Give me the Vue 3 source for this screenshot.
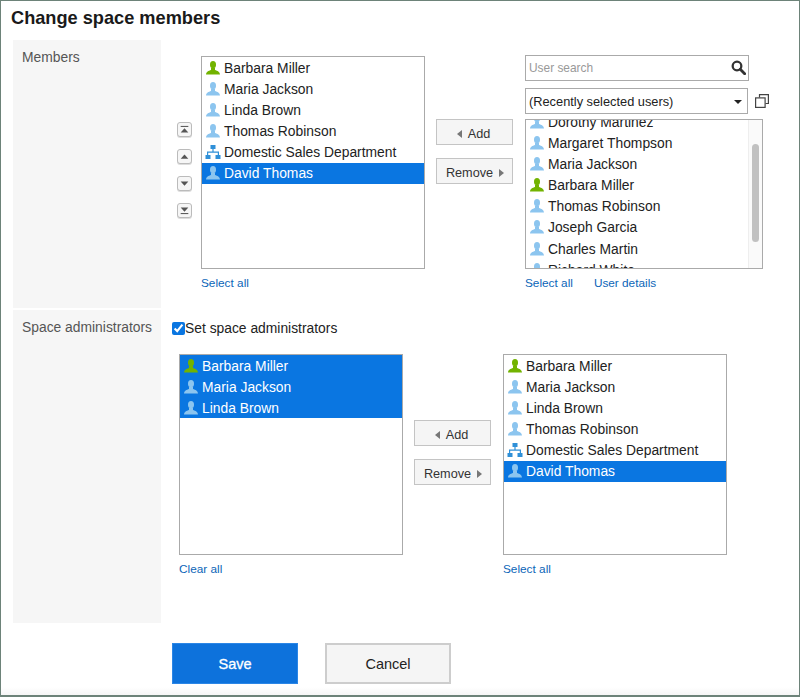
<template>
  <div class="page">
    <!-- shared icons -->
    <svg class="sprite" aria-hidden="true">
      <symbol id="person" viewBox="0 0 14 14">
        <ellipse cx="7" cy="3.7" rx="3" ry="3.6" />
        <path d="M0 13.6C0 10.8 2.6 9.9 5 9V7h4v2c2.4.9 5 1.8 5 4.6z" />
      </symbol>
      <symbol id="org" viewBox="0 0 16 14">
        <rect x="5.5" y="0" width="5" height="4" />
        <rect x="0.5" y="10" width="5" height="4" />
        <rect x="10.5" y="10" width="5" height="4" />
        <path d="M7.4 4h1.2v2.6H14V10h-1.2V7.8H3.2V10H2V6.6h5.4z" />
      </symbol>
    </svg>

    <h1 class="title">Change space members</h1>

    <section class="row row-members">
      <div class="label">Members</div>
      <div class="content picker">
        <div class="order">
          <button v-for="o in orderBtns" :key="o" class="order-btn" type="button">
            <svg width="11" height="9" viewBox="0 0 11 9">
              <rect v-if="o === 'top'" x="1" y="0" width="9" height="1.5" />
              <path v-if="o === 'top' || o === 'up'" :d="o === 'top' ? 'M5.5 3L10 8H1z' : 'M5.5 2L10 7H1z'" />
              <path v-if="o === 'down' || o === 'bottom'" :d="o === 'bottom' ? 'M1 1h9L5.5 6z' : 'M1 2h9L5.5 7z'" />
              <rect v-if="o === 'bottom'" x="1" y="7.5" width="9" height="1.5" />
            </svg>
          </button>
        </div>

        <div class="col-list">
          <ul class="listbox members-box">
            <li v-for="m in members" :key="m.name" class="item" :class="{ selected: m.selected }">
              <svg class="ico" :class="m.type" :width="m.type === 'org' ? 16 : 14" height="14">
                <use :href="m.type === 'org' ? '#org' : '#person'" />
              </svg>
              <span>{{ m.name }}</span>
            </li>
          </ul>
          <div class="links"><a href="#">Select all</a></div>
        </div>

        <div class="move-btns first">
          <button class="move" type="button"><i class="tri left" />Add</button>
          <button class="move" type="button">Remove<i class="tri right" /></button>
        </div>

        <div class="col-right">
          <div class="search">
            <input type="text" placeholder="User search" />
            <svg class="search-ico" width="15" height="15" viewBox="0 0 17 17">
              <circle cx="6.8" cy="6.8" r="4.9" fill="none" stroke="#333" stroke-width="2.6" />
              <path d="M10.5 10.5l5 5" stroke="#333" stroke-width="3.2" stroke-linecap="round" />
            </svg>
          </div>
          <div class="select-line">
            <div class="select">
              <span>(Recently selected users)</span>
              <i class="caret" />
            </div>
            <svg class="copy-ico" width="14" height="14" viewBox="0 0 14 14" fill="none" stroke="#444" stroke-width="1.2">
              <path d="M4.5 3.5V.6h8.9v8.9h-2.9" />
              <rect x="0.6" y="3.9" width="9.5" height="9.5" />
            </svg>
          </div>
          <div class="listbox users-box">
            <ul class="users-scroll">
              <li v-for="u in users" :key="u.name" class="item">
                <svg class="ico" :class="u.type" width="14" height="14"><use href="#person" /></svg>
                <span>{{ u.name }}</span>
              </li>
            </ul>
            <div class="scrollbar"><div class="thumb" /></div>
          </div>
          <div class="links">
            <a href="#">Select all</a>
            <a href="#">User details</a>
          </div>
        </div>
      </div>
    </section>

    <section class="row row-admins">
      <div class="label">Space administrators</div>
      <div class="content">
        <label class="check">
          <input type="checkbox" checked />
          <span>Set space administrators</span>
        </label>
        <div class="picker picker-admins">
          <div class="col-list">
            <ul class="listbox admins-box">
              <li v-for="a in admins" :key="a.name" class="item selected">
                <svg class="ico" :class="a.type" width="14" height="14"><use href="#person" /></svg>
                <span>{{ a.name }}</span>
              </li>
            </ul>
            <div class="links"><a href="#">Clear all</a></div>
          </div>
          <div class="move-btns second">
            <button class="move" type="button"><i class="tri left" />Add</button>
            <button class="move" type="button">Remove<i class="tri right" /></button>
          </div>
          <div class="col-list">
            <ul class="listbox admins-box">
              <li v-for="m in members" :key="m.name" class="item" :class="{ selected: m.selected }">
                <svg class="ico" :class="m.type" :width="m.type === 'org' ? 16 : 14" height="14">
                  <use :href="m.type === 'org' ? '#org' : '#person'" />
                </svg>
                <span>{{ m.name }}</span>
              </li>
            </ul>
            <div class="links"><a href="#">Select all</a></div>
          </div>
        </div>
      </div>
    </section>

    <div class="footer">
      <button class="btn primary" type="button">Save</button>
      <button class="btn" type="button">Cancel</button>
    </div>
  </div>
</template>

<script setup>
const orderBtns = ['top', 'up', 'down', 'bottom']

const members = [
  { name: 'Barbara Miller', type: 'green' },
  { name: 'Maria Jackson', type: 'blue' },
  { name: 'Linda Brown', type: 'blue' },
  { name: 'Thomas Robinson', type: 'blue' },
  { name: 'Domestic Sales Department', type: 'org' },
  { name: 'David Thomas', type: 'blue', selected: true },
]

const users = [
  { name: 'Dorothy Martinez', type: 'blue' },
  { name: 'Margaret Thompson', type: 'blue' },
  { name: 'Maria Jackson', type: 'blue' },
  { name: 'Barbara Miller', type: 'green' },
  { name: 'Thomas Robinson', type: 'blue' },
  { name: 'Joseph Garcia', type: 'blue' },
  { name: 'Charles Martin', type: 'blue' },
  { name: 'Richard White', type: 'blue' },
]

const admins = [
  { name: 'Barbara Miller', type: 'green' },
  { name: 'Maria Jackson', type: 'blue' },
  { name: 'Linda Brown', type: 'blue' },
]
</script>

<style>
html, body {
  margin: 0;
  background: #fff;
}
</style>

<style scoped>
.page {
  box-sizing: border-box;
  width: 800px;
  height: 697px;
  padding: 0 0 0 12px;
  border: 1px solid #6d8379;
  border-bottom-width: 2px;
  font-family: "Liberation Sans", Arial, sans-serif;
  font-size: 13.85px;
  color: #222;
  background: linear-gradient(180deg, #fff 686px, #f6f6f6 100%);
  overflow: hidden;
}
.sprite {
  display: block;
  width: 0;
  height: 0;
}
.title {
  margin: 0;
  height: 39px;
  padding-top: 8px;
  box-sizing: border-box;
  margin-left: -2px;
  font-size: 18.2px;
  line-height: 19px;
  font-weight: 700;
  color: #1a1a1a;
}
.row {
  display: flex;
}
.row-members {
  height: 268px;
  margin-bottom: 2px;
}
.row-admins {
  height: 313px;
}
.label {
  box-sizing: border-box;
  width: 148px;
  flex: none;
  padding: 9px 0 0 9px;
  background: #f6f6f6;
  color: #555;
  line-height: 16px;
}
.content {
  padding-left: 11px;
}
.picker {
  display: flex;
  align-items: flex-start;
}
.row-members .picker {
  padding-top: 15px;
}
.order {
  display: flex;
  flex-direction: column;
  gap: 12px;
  margin: 67px 9px 0 5px;
}
.order-btn {
  display: flex;
  align-items: center;
  justify-content: center;
  width: 15px;
  height: 15px;
  padding: 0;
  border: 1px solid #bbb;
  border-radius: 3px;
  background: #f6f6f6;
  box-shadow: 0 1px 0 #ddd;
}
.order-btn svg {
  fill: #555;
  transform: scale(0.85);
}
.col-list {
  width: 224px;
}
.row-members .col-list {
  margin-top: 1px;
}
.listbox {
  box-sizing: border-box;
  margin: 0;
  padding: 0;
  list-style: none;
  border: 1px solid #aaa;
  background: #fff;
}
.members-box {
  height: 213px;
}
.admins-box {
  height: 201px;
}
.item {
  display: flex;
  align-items: center;
  gap: 4px;
  height: 21.17px;
  padding-left: 4px;
  white-space: nowrap;
  color: #222;
}
.item.selected {
  background: #0a76e1;
  color: #fff;
}
.ico {
  flex: none;
}
.ico.blue {
  fill: #8cc5ef;
}
.ico.green {
  fill: #72b300;
}
.ico.org {
  fill: #2f90d8;
  margin-left: -1px;
  margin-right: -1px;
}
.links {
  display: flex;
  gap: 21px;
  margin-top: 7px;
  font-size: 11.8px;
  line-height: 14px;
}
.links a {
  color: #0b65b8;
  text-decoration: none;
}
.move-btns {
  display: flex;
  flex-direction: column;
  gap: 13px;
  width: 77px;
  margin: 0 12px 0 11px;
}
.move-btns.first {
  margin-top: 64px;
}
.move-btns.second {
  margin-top: 66px;
}
.move {
  display: flex;
  align-items: center;
  justify-content: center;
  gap: 6px;
  box-sizing: border-box;
  height: 26px;
  padding: 3px 2px 0 0;
  border: 1px solid #c4c4c4;
  background: #f5f5f5;
  font: inherit;
  font-size: 12.7px;
  color: #333;
}
.move + .move {
  padding: 3px 0 0 1px;
}
.tri {
  display: block;
  width: 0;
  height: 0;
  border-top: 4px solid transparent;
  border-bottom: 4px solid transparent;
}
.tri.left {
  border-right: 5px solid #777;
}
.tri.right {
  border-left: 5px solid #777;
}
.col-right {
  width: 238px;
}
.search {
  position: relative;
  width: 224px;
  height: 26px;
  margin-bottom: 7px;
}
.search input {
  box-sizing: border-box;
  width: 100%;
  height: 100%;
  padding: 0 26px 0 3px;
  border: 1px solid #aaa;
  outline: none;
  font: inherit;
  font-size: 11.9px;
}
.search input::placeholder {
  color: #999;
  opacity: 1;
}
.search-ico {
  position: absolute;
  top: 5px;
  right: 3px;
}
.select-line {
  display: flex;
  align-items: center;
  gap: 7px;
  margin-bottom: 5px;
}
.select {
  display: flex;
  flex: none;
  align-items: center;
  justify-content: space-between;
  box-sizing: border-box;
  width: 223px;
  height: 26px;
  padding: 0 5px 0 3px;
  border: 1px solid #aaa;
  background: #fff;
  font-size: 12.8px;
}
.copy-ico {
  flex: none;
}
.caret {
  display: block;
  width: 0;
  height: 0;
  margin-top: 1px;
  border-left: 4px solid transparent;
  border-right: 4px solid transparent;
  border-top: 4.5px solid #222;
}
.users-box {
  position: relative;
  height: 150px;
  overflow: hidden;
}
.users-scroll {
  margin: -9px 0 0;
  padding: 0;
  list-style: none;
}
.scrollbar {
  position: absolute;
  top: 0;
  right: 0;
  bottom: 0;
  width: 14px;
  box-sizing: border-box;
  border-left: 1px solid #eee;
  background: #fafafa;
}
.thumb {
  position: absolute;
  top: 24px;
  left: 3px;
  width: 7px;
  height: 98px;
  border-radius: 4px;
  background: #c1c1c1;
}
.check {
  display: flex;
  align-items: center;
  height: 14px;
  margin-top: 11px;
  margin-bottom: 19px;
  line-height: 14px;
}
.check input {
  width: 13px;
  height: 13px;
  margin: 0;
  accent-color: #0a76e1;
}
.picker-admins {
  padding-left: 7px;
}
.footer {
  display: flex;
  gap: 27px;
  margin-top: 20px;
  padding-left: 159px;
}
.btn {
  box-sizing: border-box;
  width: 126px;
  height: 41px;
  padding: 0;
  border: 2px solid #cdcdcd;
  background: #f5f5f5;
  font: inherit;
  font-size: 14.5px;
  color: #222;
}
.btn.primary {
  border: 1px solid #2b86e6;
  background: #0d72dc;
  color: #fff;
  -webkit-text-stroke: 0.3px #fff;
}
</style>
